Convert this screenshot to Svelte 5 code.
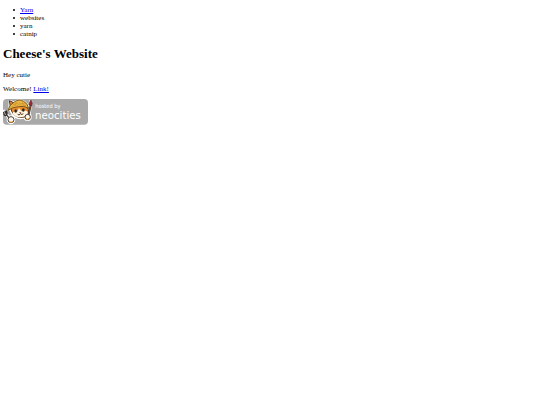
<script lang="ts">
  interface NavItem {
    label: string;
    href?: string;
  }

  const items: NavItem[] = [
    { label: 'Yarn', href: '#yarn' },
    { label: 'websites' },
    { label: 'yarn' },
    { label: 'catnip' },
  ];
</script>

<main>
  <ul>
    {#each items as item (item.label)}
      <li>
        {#if item.href}
          <a href={item.href}>{item.label}</a>
        {:else}
          {item.label}
        {/if}
      </li>
    {/each}
  </ul>

  <h1>Cheese's Website</h1>
  <p>Hey cutie</p>
  <p>Welcome! <a href="#link">Link!</a></p>

  <svg class="badge" viewBox="0 0 255 78" role="img" aria-label="hosted by neocities">
    <rect width="255" height="77" rx="11" fill="#a9a9a9" />

    <!-- white sticker edge -->
    <g fill="#fff" stroke="#fff" stroke-width="4" stroke-linejoin="round" stroke-linecap="round">
      <path d="M18 28 L19 5 L33 9 Q48 -1 62 6 L73 16 L77 28 L80 43 Q71 57 53 59 Q31 57 25 42 Z" />
      <path d="M3 37 L21 60 M83 8 L77 52" stroke-width="10" />
      <circle cx="24" cy="62" r="11" />
      <circle cx="74" cy="54" r="10" />
    </g>

    <!-- fork and brush -->
    <g fill="none" stroke="#332f2d" stroke-linecap="round" stroke-linejoin="round">
      <path d="M10 47 L22 61 M2 40 L4 48 Q8 51 11 47 Q14 42 10 36 M6 37 L10 46" stroke-width="4" />
      <path d="M83 19 L76 50" stroke-width="6" />
      <path d="M83 20 L77 46" stroke="#a95d36" stroke-width="2" />
    </g>
    <path d="M78 18 Q78 9 84 3 Q90 11 86 20 Z" fill="#a52b36" stroke="#4a292a" stroke-width="2" />

    <!-- head -->
    <path
      d="M23 27 L19 5 L34 12 L70 19 Q79 31 76 44 Q69 57 49 55 Q28 51 23 27 Z"
      fill="#ec8b2c"
      stroke="#49301f"
      stroke-width="3"
      stroke-linejoin="round"
    />
    <path d="M28 42 Q34 34 43 38 L48 27 L55 37 Q66 31 75 39 Q71 52 58 54 Q41 57 33 49 Z" fill="#fff4df" />
    <path
      d="M15 34 Q19 16 34 9 Q48 -2 62 7 Q74 13 77 28 Q63 19 47 23 Q27 25 15 34 Z"
      fill="#edbc4b"
      stroke="#79571e"
      stroke-width="3"
      stroke-linejoin="round"
    />
    <path
      d="M29 17 Q46 8 67 15 M23 25 Q43 13 70 20 M43 6 Q37 13 36 20 M57 7 L62 17"
      fill="none"
      stroke="#c98b24"
      stroke-width="2"
    />
    <ellipse cx="38" cy="36" rx="4" ry="5" fill="#292623" />
    <ellipse cx="61" cy="33" rx="4" ry="5" fill="#292623" />
    <path d="M48 40 L55 39 L52 44 Z" fill="#9b4a38" />
    <path d="M44 46 Q49 51 52 44 Q57 49 61 44" fill="none" stroke="#49301f" stroke-width="3" />

    <!-- paws -->
    <g fill="#fffaf0" stroke="#4b4038" stroke-width="3">
      <circle cx="24" cy="62" r="9" />
      <circle cx="74" cy="54" r="8" />
    </g>
    <path d="M18 67 Q24 73 30 67 M69 59 Q74 63 79 58" fill="none" stroke="#e99737" stroke-width="3" />

    <text class="small" x="97" y="28">hosted by</text>
    <text class="brand" x="96" y="60">neocities</text>
  </svg>
</main>

<style>
  :global(body) {
    margin: 0;
    background: #fff;
  }

  main {
    padding: 6px 3px;
    color: #000;
    font-family: 'Liberation Serif', 'Times New Roman', serif;
    font-size: 7px;
    line-height: 8px;
  }

  ul {
    margin: 0;
    padding-left: 10px;
    list-style: none;
  }

  li {
    display: flex;
    align-items: center;
  }

  li::before {
    content: '';
    width: 2px;
    height: 2px;
    margin-right: 5px;
    border-radius: 50%;
    background: #000;
  }

  h1 {
    margin: 8px 0 9px;
    font-size: 13px;
    line-height: 16px;
  }

  p {
    margin: 0 0 6px;
  }

  a {
    color: #0000ee;
    text-decoration: underline;
  }

  .badge {
    display: block;
    width: 85px;
    height: 26px;
  }

  .badge text {
    fill: #fff;
    font-family: 'DejaVu Sans Condensed', 'Open Sans', sans-serif;
  }

  .badge .small {
    font-size: 17px;
  }

  .badge .brand {
    font-size: 34px;
  }
</style>
